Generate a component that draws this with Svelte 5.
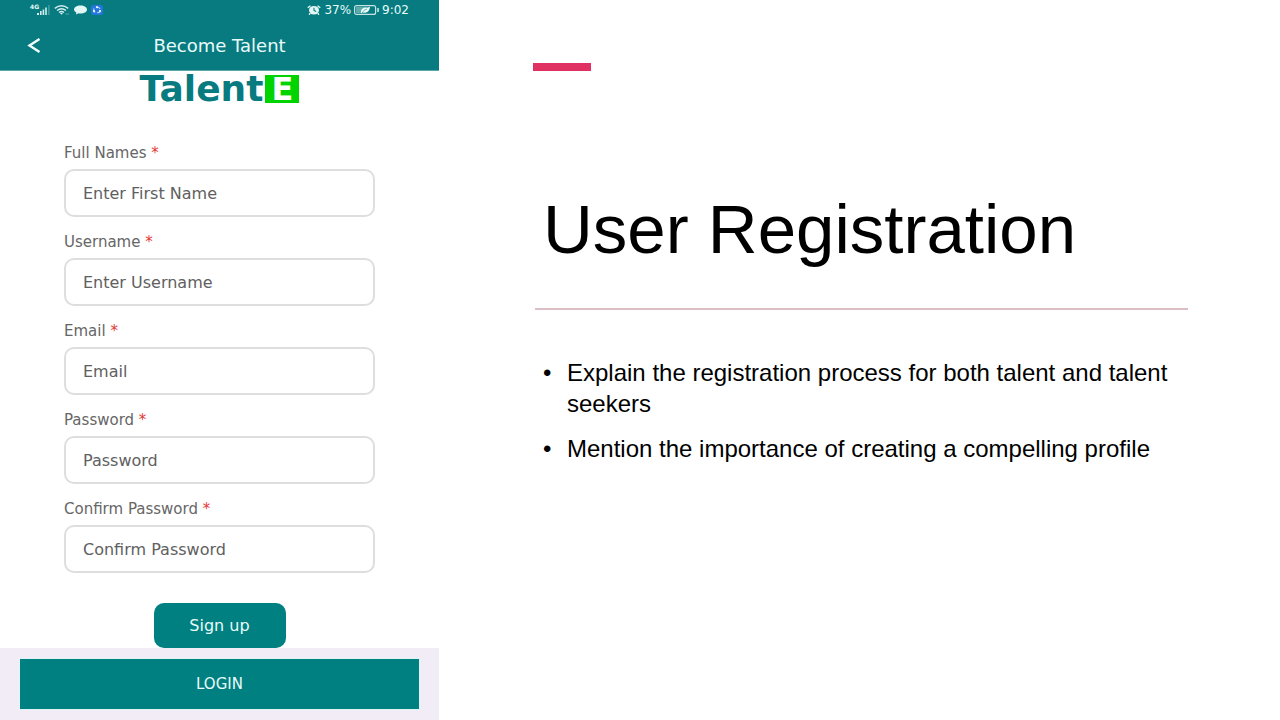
<script>
  const fields = [
    { id: 'fullName', label: 'Full Names', placeholder: 'Enter First Name', type: 'text' },
    { id: 'username', label: 'Username', placeholder: 'Enter Username', type: 'text' },
    { id: 'email', label: 'Email', placeholder: 'Email', type: 'email' },
    { id: 'password', label: 'Password', placeholder: 'Password', type: 'password' },
    { id: 'confirmPassword', label: 'Confirm Password', placeholder: 'Confirm Password', type: 'password' }
  ];

  const points = [
    'Explain the registration process for both talent and talent seekers',
    'Mention the importance of creating a compelling profile'
  ];
</script>

<main>
  <section class="phone">
    <header>
      <div class="status">
        <div class="status-left">
          <span class="network">4G</span>
          <svg class="signal" width="13" height="10" viewBox="0 0 13 10" fill="#d5eeee">
            <rect x="0" y="8" width="2" height="2" />
            <rect x="3" y="6" width="1.6" height="4" />
            <rect x="5.6" y="4.5" width="1.6" height="5.5" />
            <rect x="8.2" y="2.5" width="1.6" height="7.5" />
            <rect x="11.4" y="0" width="1" height="10" opacity="0.45" />
          </svg>
          <svg width="16" height="10" viewBox="0 0 16 10" fill="none" stroke="#d5eeee" stroke-width="1.4">
            <path d="M0.8 3.4Q7.5 -1.8 14.2 3.4" />
            <path d="M3 5.5Q7.5 2 12 5.5" />
            <path d="M5 7.5Q7.5 5.4 10 7.5" />
            <path d="M6 8.3L7.5 9.8L9 8.3Q7.5 7.4 6 8.3Z" fill="#d5eeee" stroke="none" />
            <path d="M11.5 9H15" stroke-width="1" opacity="0.4" />
          </svg>
          <svg width="13" height="10" viewBox="0 0 13 10" fill="#e2f7f5">
            <path d="M6.5 0.5C10.3 0.5 13 2.2 13 4.5C13 6.9 10.3 8.5 6.5 8.5Q5.5 8.5 4.7 8.3L2 9.6L2.4 7.5Q0 6.4 0 4.5C0 2.2 2.7 0.5 6.5 0.5Z" />
          </svg>
          <svg width="12" height="10" viewBox="0 0 12 10">
            <rect width="12" height="10" rx="2.5" fill="#2376dc" />
            <ellipse cx="6" cy="5" rx="3.3" ry="2.8" fill="none" stroke="#bfe3fb" stroke-width="1.1" stroke-dasharray="4.5 2" />
            <circle cx="6" cy="2.2" r="1.1" fill="#e6f5ff" />
            <circle cx="3" cy="6.2" r="1.1" fill="#e6f5ff" />
            <circle cx="9" cy="6.2" r="1.1" fill="#e6f5ff" />
          </svg>
        </div>
        <div class="status-right">
          <svg width="14" height="10" viewBox="0 0 14 10">
            <ellipse cx="7" cy="5.3" rx="5" ry="4.2" fill="#e2f7f5" />
            <path d="M0.7 2.7L3.5 0.7M13.3 2.7L10.5 0.7M3.3 8.3L2 9.7M10.7 8.3L12 9.7" stroke="#e2f7f5" stroke-width="1.4" />
            <path d="M7 2.8V5.5L9.2 6.6" fill="none" stroke="#087b80" stroke-width="1.1" />
          </svg>
          <span>37%</span>
          <svg width="25" height="10" viewBox="0 0 25 10">
            <rect x="0.6" y="0.6" width="21" height="8.8" rx="2" fill="none" stroke="#c5e5e5" stroke-width="1.2" />
            <rect x="2" y="2" width="10" height="6" fill="#5eabab" />
            <path d="M7 8Q6.5 3.4 11 2.6Q14 2.5 16 1.7Q15.5 7.5 11 7.5Q9.5 7.6 8.3 7L7.5 8.4Z" fill="#eafffb" />
            <path d="M8.5 7Q10 5 13 4" fill="none" stroke="#087b80" stroke-width="0.6" />
            <rect x="23.3" y="3" width="1.5" height="4" rx="0.5" fill="#d5eeee" />
          </svg>
          <span>9:02</span>
        </div>
      </div>
      <div class="app-bar">
        <button class="back" aria-label="Back">
          <svg width="14" height="16" viewBox="0 0 14 16" fill="none" stroke="#f2ffff" stroke-width="2.4">
            <path d="M12.500 2L2.500 8.500L12.500 15" />
          </svg>
        </button>
        <h2>Become Talent</h2>
      </div>
    </header>

    <div class="logo">Talent<span>E</span></div>

    <form>
      {#each fields as field}
        <div class="field">
          <label for={field.id}>{field.label} <span>*</span></label>
          <input id={field.id} type={field.type} placeholder={field.placeholder} />
        </div>
      {/each}
      <button class="sign-up" type="button">Sign up</button>
    </form>

    <footer>
      <button class="login">LOGIN</button>
    </footer>
  </section>

  <section class="slide">
    <div class="accent"></div>
    <h1>User Registration</h1>
    <hr />
    <ul>
      {#each points as point}
        <li>{point}</li>
      {/each}
    </ul>
  </section>
</main>

<style>
  :global(body) {
    margin: 0;
    background: #fff;
  }

  main {
    display: grid;
    grid-template-columns: 439fr 841fr;
    min-height: 100vh;
    font-family: "Liberation Sans", Arial, sans-serif;
  }

  button, input {
    box-sizing: border-box;
    font-family: inherit;
  }

  .phone {
    display: flex;
    flex-direction: column;
    font-family: "DejaVu Sans", Verdana, sans-serif;
  }

  header {
    height: 70px;
    border-bottom: 1px solid #5ba6a9;
    background: #087b80;
    color: #e8fbfb;
  }

  .status {
    display: flex;
    justify-content: space-between;
    height: 20px;
    padding: 0 30px;
    font-size: 12px;
    line-height: 20px;
  }

  .status-left, .status-right {
    display: flex;
    align-items: center;
    gap: 4px;
  }

  .status-right {
    gap: 3px;
  }

  .network {
    align-self: flex-start;
    font-size: 6px;
    font-weight: bold;
    line-height: 14px;
  }

  .signal {
    margin-left: -6px;
  }

  .app-bar {
    display: grid;
    grid-template-columns: 48px 1fr 48px;
    align-items: center;
    height: 50px;
    padding: 0 10px;
  }

  .back {
    display: flex;
    justify-content: center;
    padding: 8px;
    border: 0;
    background: none;
  }

  h2 {
    margin: 0;
    font-size: 18px;
    font-weight: normal;
    text-align: center;
  }

  .logo {
    display: flex;
    justify-content: center;
    align-items: center;
    gap: 2px;
    padding-top: 4px;
    color: #087b80;
    font-size: 36px;
    font-weight: bold;
    line-height: 28px;
  }

  .logo span {
    width: 34px;
    background: #00d400;
    color: #fff;
    font-size: 32px;
    text-align: center;
  }

  form {
    display: flex;
    flex: 1;
    flex-direction: column;
    padding: 40px 64px 0;
  }

  .field {
    display: flex;
    flex-direction: column;
    margin-bottom: 15px;
  }

  label {
    margin-bottom: 6px;
    color: #666;
    font-size: 15px;
    line-height: 20px;
  }

  label span {
    color: #e53935;
  }

  input {
    width: 100%;
    height: 48px;
    padding: 0 17px;
    border: 2px solid #dedede;
    border-radius: 10px;
    background: #fff;
    color: #606060;
    font-size: 16px;
  }

  input::placeholder {
    color: #606060;
    opacity: 1;
  }

  .sign-up {
    align-self: center;
    width: 132px;
    height: 45px;
    margin-top: 15px;
    border: 0;
    border-radius: 10px;
    background: #008080;
    color: #e8fbfb;
    font-size: 16px;
  }

  footer {
    padding: 10px 19px;
    background: #f2ecf6;
  }

  .login {
    width: 100%;
    height: 52px;
    border: 1px solid #dff5f5;
    background: #008080;
    color: #e8fbfb;
    font-size: 15px;
  }

  .slide {
    padding: 63px 92px 0 94px;
    color: #000;
  }

  .accent {
    width: 58px;
    height: 8px;
    background: #e03163;
  }

  h1 {
    margin: 119px 0 38px;
    padding-left: 10px;
    font-size: 69px;
    font-weight: normal;
    line-height: 80px;
  }

  hr {
    height: 2px;
    margin: 0 0 47px 2px;
    border: 0;
    background: #dbbfc4;
  }

  ul {
    margin: 0;
    padding: 0 0 0 34px;
    font-size: 24px;
    line-height: 31px;
    list-style: none;
  }

  li {
    margin-bottom: 14px;
  }

  li::before {
    content: "•";
    display: inline-block;
    width: 24px;
    margin-left: -24px;
  }
</style>
